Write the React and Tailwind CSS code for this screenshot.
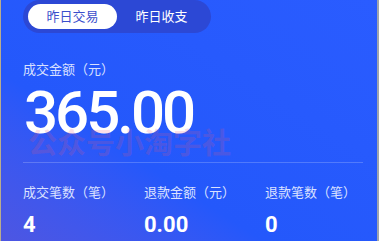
import { useState } from 'react';

const stats = [
  { label: '成交笔数（笔）', value: '4' },
  { label: '退款金额（元）', value: '0.00' },
  { label: '退款笔数（笔）', value: '0' },
];

export default function App() {
  const [tab, setTab] = useState(0);
  const tabs = ['昨日交易', '昨日收支'];

  return (
    <div
      className="relative h-[241px] w-[379px] overflow-hidden border-l border-l-[#b9ac8d] border-r-2 border-r-[#9fa4ac] bg-linear-to-tr from-[#4d56e2] via-[#2458fb] via-35% to-[#2a5cff] px-[22px]"
      style={{ fontFamily: 'Roboto, "Noto Sans CJK SC", sans-serif' }}
    >
      <div className="flex h-[33px] w-[188px] items-center rounded-full bg-[#2c48d5] px-[5px]">
        {tabs.map((t, i) => (
          <button
            key={t}
            onClick={() => setTab(i)}
            className={
              i === tab
                ? 'flex h-[25px] flex-1 items-center justify-center rounded-full bg-white text-[13px] text-[#3b4fcc]'
                : 'flex h-[25px] flex-1 items-center justify-center rounded-full text-[13px] text-white'
            }
          >
            {t}
          </button>
        ))}
      </div>

      <div className="mt-[28px] text-[13px] leading-[18px] text-[#d9e0ff]">成交金额（元）</div>
      <div className="relative mt-[4px] pl-[1px] text-[60px] font-medium leading-none tracking-[-3px] text-white">
        365.00
        <div className="pointer-events-none absolute left-[5px] top-[47px] text-[29px] font-bold leading-none tracking-[0px] text-[#e8557f]/20">
          公众号小淘字社
        </div>
      </div>

      <div className="mt-[19px] h-px w-[340px] bg-white/20" />

      <div className="mt-[21px] grid grid-cols-[121px_121px_1fr]">
        {stats.map((s) => (
          <div key={s.label}>
            <div className="text-[13px] leading-[18px] text-[#dbe2ff]">{s.label}</div>
            <div className="mt-[12px] text-[22px] font-bold leading-none text-white">{s.value}</div>
          </div>
        ))}
      </div>
    </div>
  );
}
